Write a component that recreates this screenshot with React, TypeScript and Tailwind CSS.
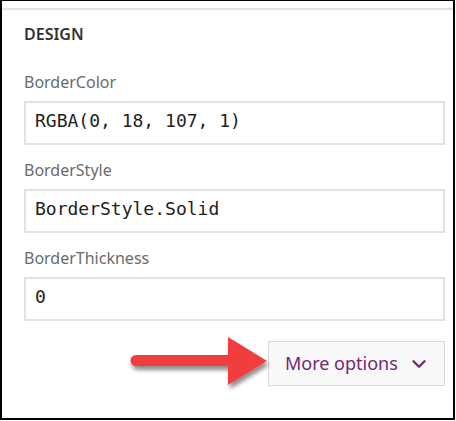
import { ChevronDown } from 'lucide-react';

const fields = [
  { label: 'BorderColor', value: 'RGBA(0, 18, 107, 1)' },
  { label: 'BorderStyle', value: 'BorderStyle.Solid' },
  { label: 'BorderThickness', value: '0' },
];

function Field({ label, value }: { label: string; value: string }) {
  return (
    <div className="flex flex-col">
      <div className="mt-[15px] mb-[9px] text-[16px] leading-[20px] text-[#6b6b6b]">{label}</div>
      <div className="h-[44px] border-2 border-[#e2e2e2] bg-white flex items-center pl-[9px] pb-[4px]">
        <span className="text-[18px] leading-[24px] text-[#1e1e1e] font-['DejaVu_Sans_Mono',monospace]">
          {value}
        </span>
      </div>
    </div>
  );
}

export default function App() {
  return (
    <div className="w-[456px] h-[421px] bg-white font-['Noto_Sans',sans-serif]">
      <div className="relative w-[455px] h-[420px] border-t border-l-2 border-r-2 border-b-2 border-black bg-white flex flex-col">
        <div className="mt-[7px] h-[2px] bg-[#e3e3e3]" />

        <div className="flex flex-col pl-[22px] pr-[8px]">
          <h2 className="mt-[13px] mb-[12px] text-[16px] leading-[22px] font-semibold text-[#333]">DESIGN</h2>

          <div className="flex flex-col">
            {fields.map((f) => (
              <Field key={f.label} label={f.label} value={f.value} />
            ))}
          </div>

          <div className="flex justify-end mt-[20px]">
            <button className="h-[45px] w-[177px] border border-[#d9d9d9] bg-[#f8f8f8] flex items-center justify-between pl-[16px] pr-[14px] text-[18px] text-[#742774]">
              <span>More options</span>
              <ChevronDown className="w-[22px] h-[22px]" strokeWidth={2.6} />
            </button>
          </div>
        </div>

        {/* red annotation arrow */}
        <svg
          className="absolute left-[110px] top-[325px] pointer-events-none"
          width="160"
          height="70"
          viewBox="0 0 160 70"
        >
          <defs>
            <filter id="sh" x="-20%" y="-40%" width="140%" height="180%">
              <feDropShadow dx="2" dy="4" stdDeviation="2" floodColor="#000" floodOpacity="0.45" />
            </filter>
          </defs>
          <g filter="url(#sh)" fill="#f03c3e">
            <line x1="24" y1="34.5" x2="120" y2="34.5" stroke="#f03c3e" strokeWidth="11" strokeLinecap="round" />
            <polygon points="116,11 155,35 116,59" />
          </g>
        </svg>
      </div>
    </div>
  );
}
